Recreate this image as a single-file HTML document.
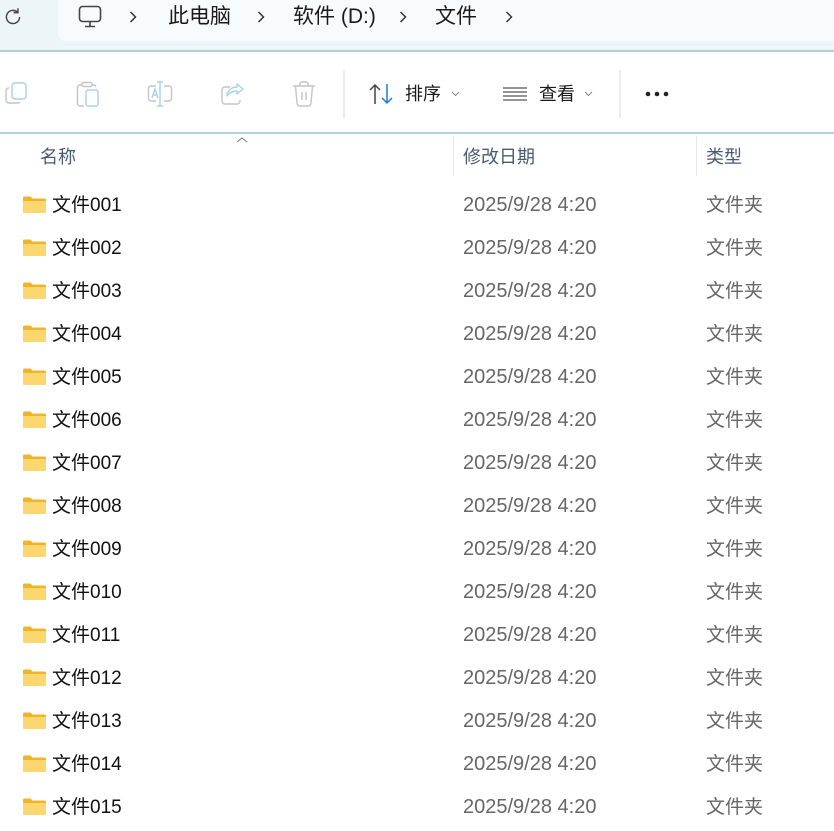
<!DOCTYPE html>
<html><head><meta charset="utf-8"><style>
*{margin:0;padding:0;box-sizing:border-box}
body{width:834px;height:831px;overflow:hidden;background:#fff;font-family:"Liberation Sans","Noto Sans CJK SC",sans-serif;position:relative}
.top{position:absolute;left:0;top:0;width:834px;height:52px;background:#eef5f8;border-bottom:2px solid #b3d1d8}
.addr{position:absolute;left:58px;top:0;width:776px;height:41px;background:#f8fbfd;border-radius:0 0 0 8px}
.t{position:absolute;font-size:21px;line-height:26px;color:#1a1a1a;white-space:nowrap}
.chev{position:absolute;top:10px}
.tb{position:absolute;left:0;top:54px;width:834px;height:80px;border-bottom:2px solid #b3d1d8}
.sep{position:absolute;top:16px;width:2px;height:48px;background:#ececec}
.hd{position:absolute;top:145px;font-size:18px;line-height:24px;color:#4a5a70}
.csep{position:absolute;top:136px;width:1px;height:40px;background:#e8e8e8}
.row{position:absolute;left:0;width:834px;height:43px}
.row svg{position:absolute;left:23px;top:14px}
.n,.d,.k{position:absolute;top:12px;line-height:24px;white-space:nowrap}
.n{left:52px;font-size:19px;color:#111}
.d{left:463px;font-size:20px;color:#666;top:11px}
.k{left:706px;font-size:19px;color:#666}
</style></head><body>
<div class="top">
<svg style="position:absolute;left:2px;top:6px" width="22" height="22" viewBox="0 0 20 20"><path d="M16 10a6 6 0 1 1-2-4.5" fill="none" stroke="#444" stroke-width="1.3"/><path d="M14.5 2v4h-4" fill="none" stroke="#444" stroke-width="1.3"/></svg>
<div class="addr"></div>
<svg style="position:absolute;left:78px;top:5px" width="24" height="24" viewBox="0 0 24 24"><rect x="1.5" y="1.5" width="21" height="15" rx="3" fill="none" stroke="#444" stroke-width="1.6"/><path d="M12 17v4M7 21.5h10" stroke="#444" stroke-width="1.6"/></svg>
<svg class="chev" style="left:129px" width="8" height="14" viewBox="0 0 8 14"><path d="M1.5 2l5 5-5 5" fill="none" stroke="#333" stroke-width="1.5"/></svg>
<div class="t" style="left:168px;top:4px">此电脑</div>
<svg class="chev" style="left:257px" width="8" height="14" viewBox="0 0 8 14"><path d="M1.5 2l5 5-5 5" fill="none" stroke="#333" stroke-width="1.5"/></svg>
<div class="t" style="left:293px;top:4px">软件 (D:)</div>
<svg class="chev" style="left:399px" width="8" height="14" viewBox="0 0 8 14"><path d="M1.5 2l5 5-5 5" fill="none" stroke="#333" stroke-width="1.5"/></svg>
<div class="t" style="left:435px;top:4px">文件</div>
<svg class="chev" style="left:505px" width="8" height="14" viewBox="0 0 8 14"><path d="M1.5 2l5 5-5 5" fill="none" stroke="#333" stroke-width="1.5"/></svg>
</div>
<div class="tb">
<svg style="position:absolute;left:4px;top:28px" width="24" height="24" viewBox="0 0 24 24"><path d="M5 6a3 3 0 0 0-3 3v9a3 3 0 0 0 3 3h9a3 3 0 0 0 2-1" fill="none" stroke="#c4c4c4" stroke-width="1.4"/><rect x="8" y="1" width="14" height="16" rx="3" fill="none" stroke="#a8d0f0" stroke-width="1.4"/></svg>
<svg style="position:absolute;left:76px;top:27px" width="26" height="26" viewBox="0 0 26 26"><path d="M6 4H4a2.5 2.5 0 0 0-2.5 2.5v16A2.5 2.5 0 0 0 4 25h4" fill="none" stroke="#c4c4c4" stroke-width="1.4"/><rect x="6" y="1.5" width="10" height="4" rx="1.5" fill="none" stroke="#c4c4c4" stroke-width="1.4"/><path d="M16 4h2a2.5 2.5 0 0 1 2 1.5" fill="none" stroke="#c4c4c4" stroke-width="1.4"/><rect x="10" y="9" width="12" height="16" rx="2.5" fill="none" stroke="#a8d0f0" stroke-width="1.4"/></svg>
<svg style="position:absolute;left:147px;top:27px" width="26" height="26" viewBox="0 0 26 26"><path d="M9 5H4a2.5 2.5 0 0 0-2.5 2.5v10A2.5 2.5 0 0 0 4 20h5M17 5h5a2.5 2.5 0 0 1 2.5 2.5v10A2.5 2.5 0 0 1 22 20h-5" fill="none" stroke="#c4c4c4" stroke-width="1.4"/><path d="M13 1v24M10 1h6M10 25h6M5 17l3-9 3 9M6 14h4" fill="none" stroke="#a8d0f0" stroke-width="1.4"/></svg>
<svg style="position:absolute;left:220px;top:27px" width="26" height="26" viewBox="0 0 26 26"><path d="M10 6H5a3 3 0 0 0-3 3v11a3 3 0 0 0 3 3h12a3 3 0 0 0 3-3v-1" fill="none" stroke="#c4c4c4" stroke-width="1.4"/><path d="M17 3l6 5-6 5v-3c-5 0-8 2-10 5 0-5 4-9 10-9z" fill="none" stroke="#a8d0f0" stroke-width="1.4" stroke-linejoin="round"/></svg>
<svg style="position:absolute;left:292px;top:27px" width="24" height="26" viewBox="0 0 24 26"><path d="M1 5h22M8 5V3a2 2 0 0 1 2-2h4a2 2 0 0 1 2 2v2M3.5 5l1.5 17a3 3 0 0 0 3 3h8a3 3 0 0 0 3-3l1.5-17M10 11v8M14 11v8" fill="none" stroke="#c4c4c4" stroke-width="1.4"/></svg>
<div class="sep" style="left:343px"></div>
<svg style="position:absolute;left:369px;top:29px" width="26" height="22" viewBox="0 0 26 22"><path d="M6 21V2M1 7l5-5 5 5" fill="none" stroke="#444" stroke-width="1.5"/><path d="M18 1v19M13 15l5 5 5-5" fill="none" stroke="#1a7fd4" stroke-width="1.5"/></svg>
<div class="t" style="left:405px;top:28px;font-size:18px;line-height:24px">排序</div>
<svg style="position:absolute;left:451px;top:37px" width="9" height="6" viewBox="0 0 9 6"><path d="M1 1l3.5 3.5L8 1" fill="none" stroke="#888" stroke-width="1"/></svg>
<svg style="position:absolute;left:503px;top:33px" width="24" height="14" viewBox="0 0 24 14"><path d="M0 1h24M0 5h24M0 9h24M0 13h24" stroke="#555" stroke-width="1.3"/></svg>
<div class="t" style="left:539px;top:28px;font-size:18px;line-height:24px">查看</div>
<svg style="position:absolute;left:584px;top:37px" width="9" height="6" viewBox="0 0 9 6"><path d="M1 1l3.5 3.5L8 1" fill="none" stroke="#888" stroke-width="1"/></svg>
<div class="sep" style="left:619px"></div>
<svg style="position:absolute;left:645px;top:37px" width="26" height="6" viewBox="0 0 26 6"><circle cx="3" cy="3" r="2.3" fill="#222"/><circle cx="12" cy="3" r="2.3" fill="#222"/><circle cx="21" cy="3" r="2.3" fill="#222"/></svg>
</div>
<svg style="position:absolute;left:236px;top:137px" width="12" height="6" viewBox="0 0 12 6"><path d="M1 5l5-4 5 4" fill="none" stroke="#777" stroke-width="1"/></svg>
<div class="hd" style="left:40px">名称</div>
<div class="csep" style="left:453px"></div>
<div class="hd" style="left:463px">修改日期</div>
<div class="csep" style="left:696px"></div>
<div class="hd" style="left:706px">类型</div>
<div id="rows">
<div class="row" style="top:182px"><svg width="23" height="17" viewBox="0 0 23 17"><path d="M0 2a1.5 1.5 0 0 1 1.5-1.5h6l2 2H21.5A1.5 1.5 0 0 1 23 4v11.5A1.5 1.5 0 0 1 21.5 17h-20A1.5 1.5 0 0 1 0 15.5z" fill="#f0b429"/><path d="M0 5h23v10.5A1.5 1.5 0 0 1 21.5 17h-20A1.5 1.5 0 0 1 0 15.5z" fill="#fcd770"/></svg><span class="n">文件001</span><span class="d">2025/9/28 4:20</span><span class="k">文件夹</span></div>
<div class="row" style="top:225px"><svg width="23" height="17" viewBox="0 0 23 17"><path d="M0 2a1.5 1.5 0 0 1 1.5-1.5h6l2 2H21.5A1.5 1.5 0 0 1 23 4v11.5A1.5 1.5 0 0 1 21.5 17h-20A1.5 1.5 0 0 1 0 15.5z" fill="#f0b429"/><path d="M0 5h23v10.5A1.5 1.5 0 0 1 21.5 17h-20A1.5 1.5 0 0 1 0 15.5z" fill="#fcd770"/></svg><span class="n">文件002</span><span class="d">2025/9/28 4:20</span><span class="k">文件夹</span></div>
<div class="row" style="top:268px"><svg width="23" height="17" viewBox="0 0 23 17"><path d="M0 2a1.5 1.5 0 0 1 1.5-1.5h6l2 2H21.5A1.5 1.5 0 0 1 23 4v11.5A1.5 1.5 0 0 1 21.5 17h-20A1.5 1.5 0 0 1 0 15.5z" fill="#f0b429"/><path d="M0 5h23v10.5A1.5 1.5 0 0 1 21.5 17h-20A1.5 1.5 0 0 1 0 15.5z" fill="#fcd770"/></svg><span class="n">文件003</span><span class="d">2025/9/28 4:20</span><span class="k">文件夹</span></div>
<div class="row" style="top:311px"><svg width="23" height="17" viewBox="0 0 23 17"><path d="M0 2a1.5 1.5 0 0 1 1.5-1.5h6l2 2H21.5A1.5 1.5 0 0 1 23 4v11.5A1.5 1.5 0 0 1 21.5 17h-20A1.5 1.5 0 0 1 0 15.5z" fill="#f0b429"/><path d="M0 5h23v10.5A1.5 1.5 0 0 1 21.5 17h-20A1.5 1.5 0 0 1 0 15.5z" fill="#fcd770"/></svg><span class="n">文件004</span><span class="d">2025/9/28 4:20</span><span class="k">文件夹</span></div>
<div class="row" style="top:354px"><svg width="23" height="17" viewBox="0 0 23 17"><path d="M0 2a1.5 1.5 0 0 1 1.5-1.5h6l2 2H21.5A1.5 1.5 0 0 1 23 4v11.5A1.5 1.5 0 0 1 21.5 17h-20A1.5 1.5 0 0 1 0 15.5z" fill="#f0b429"/><path d="M0 5h23v10.5A1.5 1.5 0 0 1 21.5 17h-20A1.5 1.5 0 0 1 0 15.5z" fill="#fcd770"/></svg><span class="n">文件005</span><span class="d">2025/9/28 4:20</span><span class="k">文件夹</span></div>
<div class="row" style="top:397px"><svg width="23" height="17" viewBox="0 0 23 17"><path d="M0 2a1.5 1.5 0 0 1 1.5-1.5h6l2 2H21.5A1.5 1.5 0 0 1 23 4v11.5A1.5 1.5 0 0 1 21.5 17h-20A1.5 1.5 0 0 1 0 15.5z" fill="#f0b429"/><path d="M0 5h23v10.5A1.5 1.5 0 0 1 21.5 17h-20A1.5 1.5 0 0 1 0 15.5z" fill="#fcd770"/></svg><span class="n">文件006</span><span class="d">2025/9/28 4:20</span><span class="k">文件夹</span></div>
<div class="row" style="top:440px"><svg width="23" height="17" viewBox="0 0 23 17"><path d="M0 2a1.5 1.5 0 0 1 1.5-1.5h6l2 2H21.5A1.5 1.5 0 0 1 23 4v11.5A1.5 1.5 0 0 1 21.5 17h-20A1.5 1.5 0 0 1 0 15.5z" fill="#f0b429"/><path d="M0 5h23v10.5A1.5 1.5 0 0 1 21.5 17h-20A1.5 1.5 0 0 1 0 15.5z" fill="#fcd770"/></svg><span class="n">文件007</span><span class="d">2025/9/28 4:20</span><span class="k">文件夹</span></div>
<div class="row" style="top:483px"><svg width="23" height="17" viewBox="0 0 23 17"><path d="M0 2a1.5 1.5 0 0 1 1.5-1.5h6l2 2H21.5A1.5 1.5 0 0 1 23 4v11.5A1.5 1.5 0 0 1 21.5 17h-20A1.5 1.5 0 0 1 0 15.5z" fill="#f0b429"/><path d="M0 5h23v10.5A1.5 1.5 0 0 1 21.5 17h-20A1.5 1.5 0 0 1 0 15.5z" fill="#fcd770"/></svg><span class="n">文件008</span><span class="d">2025/9/28 4:20</span><span class="k">文件夹</span></div>
<div class="row" style="top:526px"><svg width="23" height="17" viewBox="0 0 23 17"><path d="M0 2a1.5 1.5 0 0 1 1.5-1.5h6l2 2H21.5A1.5 1.5 0 0 1 23 4v11.5A1.5 1.5 0 0 1 21.5 17h-20A1.5 1.5 0 0 1 0 15.5z" fill="#f0b429"/><path d="M0 5h23v10.5A1.5 1.5 0 0 1 21.5 17h-20A1.5 1.5 0 0 1 0 15.5z" fill="#fcd770"/></svg><span class="n">文件009</span><span class="d">2025/9/28 4:20</span><span class="k">文件夹</span></div>
<div class="row" style="top:569px"><svg width="23" height="17" viewBox="0 0 23 17"><path d="M0 2a1.5 1.5 0 0 1 1.5-1.5h6l2 2H21.5A1.5 1.5 0 0 1 23 4v11.5A1.5 1.5 0 0 1 21.5 17h-20A1.5 1.5 0 0 1 0 15.5z" fill="#f0b429"/><path d="M0 5h23v10.5A1.5 1.5 0 0 1 21.5 17h-20A1.5 1.5 0 0 1 0 15.5z" fill="#fcd770"/></svg><span class="n">文件010</span><span class="d">2025/9/28 4:20</span><span class="k">文件夹</span></div>
<div class="row" style="top:612px"><svg width="23" height="17" viewBox="0 0 23 17"><path d="M0 2a1.5 1.5 0 0 1 1.5-1.5h6l2 2H21.5A1.5 1.5 0 0 1 23 4v11.5A1.5 1.5 0 0 1 21.5 17h-20A1.5 1.5 0 0 1 0 15.5z" fill="#f0b429"/><path d="M0 5h23v10.5A1.5 1.5 0 0 1 21.5 17h-20A1.5 1.5 0 0 1 0 15.5z" fill="#fcd770"/></svg><span class="n">文件011</span><span class="d">2025/9/28 4:20</span><span class="k">文件夹</span></div>
<div class="row" style="top:655px"><svg width="23" height="17" viewBox="0 0 23 17"><path d="M0 2a1.5 1.5 0 0 1 1.5-1.5h6l2 2H21.5A1.5 1.5 0 0 1 23 4v11.5A1.5 1.5 0 0 1 21.5 17h-20A1.5 1.5 0 0 1 0 15.5z" fill="#f0b429"/><path d="M0 5h23v10.5A1.5 1.5 0 0 1 21.5 17h-20A1.5 1.5 0 0 1 0 15.5z" fill="#fcd770"/></svg><span class="n">文件012</span><span class="d">2025/9/28 4:20</span><span class="k">文件夹</span></div>
<div class="row" style="top:698px"><svg width="23" height="17" viewBox="0 0 23 17"><path d="M0 2a1.5 1.5 0 0 1 1.5-1.5h6l2 2H21.5A1.5 1.5 0 0 1 23 4v11.5A1.5 1.5 0 0 1 21.5 17h-20A1.5 1.5 0 0 1 0 15.5z" fill="#f0b429"/><path d="M0 5h23v10.5A1.5 1.5 0 0 1 21.5 17h-20A1.5 1.5 0 0 1 0 15.5z" fill="#fcd770"/></svg><span class="n">文件013</span><span class="d">2025/9/28 4:20</span><span class="k">文件夹</span></div>
<div class="row" style="top:741px"><svg width="23" height="17" viewBox="0 0 23 17"><path d="M0 2a1.5 1.5 0 0 1 1.5-1.5h6l2 2H21.5A1.5 1.5 0 0 1 23 4v11.5A1.5 1.5 0 0 1 21.5 17h-20A1.5 1.5 0 0 1 0 15.5z" fill="#f0b429"/><path d="M0 5h23v10.5A1.5 1.5 0 0 1 21.5 17h-20A1.5 1.5 0 0 1 0 15.5z" fill="#fcd770"/></svg><span class="n">文件014</span><span class="d">2025/9/28 4:20</span><span class="k">文件夹</span></div>
<div class="row" style="top:784px"><svg width="23" height="17" viewBox="0 0 23 17"><path d="M0 2a1.5 1.5 0 0 1 1.5-1.5h6l2 2H21.5A1.5 1.5 0 0 1 23 4v11.5A1.5 1.5 0 0 1 21.5 17h-20A1.5 1.5 0 0 1 0 15.5z" fill="#f0b429"/><path d="M0 5h23v10.5A1.5 1.5 0 0 1 21.5 17h-20A1.5 1.5 0 0 1 0 15.5z" fill="#fcd770"/></svg><span class="n">文件015</span><span class="d">2025/9/28 4:20</span><span class="k">文件夹</span></div>
</div>
</body></html>
